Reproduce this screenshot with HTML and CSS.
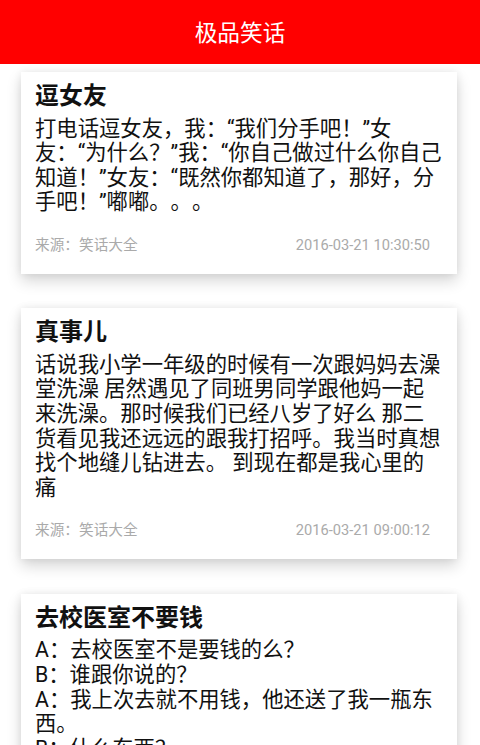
FILE: index.html
```html
<!DOCTYPE html>
<html lang="zh-CN">
<head>
<meta charset="utf-8">
<title>极品笑话</title>
<link rel="stylesheet" href="styles.css">
</head>
<body>
<header class="appbar">极品笑话</header>
<main class="list">
  <article class="card">
    <h2 class="card-title">逗女友</h2>
    <p class="card-body">打电话逗女友，我：“我们分手吧！”女友：&#8288;“为什么？”我：“你自己做过什么你自己知道！”女友：“既然你都知道了，那好，分手吧！”嘟嘟。。。</p>
    <div class="card-foot"><span>来源：笑话大全</span><span class="date">2016-03-21 10:30:50</span></div>
  </article>
  <article class="card">
    <h2 class="card-title">真事儿</h2>
    <p class="card-body">话说我小学一年级的时候有一次跟妈妈去澡堂洗澡 居然遇见了同班男同学跟他妈一起来洗澡。那时候我们已经八岁了好么 那二货看见我还远远的跟我打招呼。我当时真想找个地缝儿钻进去。 到现在都是我心里的痛</p>
    <div class="card-foot"><span>来源：笑话大全</span><span class="date">2016-03-21 09:00:12</span></div>
  </article>
  <article class="card">
    <h2 class="card-title">去校医室不要钱</h2>
    <p class="card-body pre">A：去校医室不是要钱的么？
B：谁跟你说的？
A：我上次去就不用钱，他还送了我一瓶东西。
B：什么东西？</p>
    <div class="card-foot"><span>来源：笑话大全</span><span class="date">2016-03-21 08:30:00</span></div>
  </article>
</main>
</body>
</html>
```
FILE: styles.css
```css
html, body {
  margin: 0;
  padding: 0;
  background: #ffffff;
}
body {
  font-family: Roboto, "Noto Sans CJK SC", sans-serif;
  color: #111111;
  text-spacing-trim: space-all;
}
.appbar {
  height: 64px;
  background: #ff0000;
  color: #ffffff;
  display: flex;
  align-items: center;
  justify-content: center;
  font-family: "Noto Sans CJK SC", sans-serif;
  font-size: 22.67px;
  line-height: 1;
  padding-top: 1px;
  box-sizing: border-box;
}
.list {
  display: flex;
  flex-direction: column;
  gap: 34.5px;
  padding: 8px 23px 40px 21px;
}
.card {
  background: #ffffff;
  padding: 8px 14px 19px 14px;
  box-shadow: 0 7px 14px rgba(0, 0, 0, 0.16), 0 0 8px rgba(0, 0, 0, 0.07);
}
.card-title {
  margin: 0 0 8.5px 0;
  font-family: "Noto Sans CJK SC", sans-serif;
  font-size: 24px;
  line-height: 28px;
  font-weight: bold;
  color: #111111;
}
.card-body {
  margin: 0;
  font-size: 21.33px;
  line-height: 24.6px;
  color: #111111;
}
.pre {
  white-space: pre-line;
}
.card-foot {
  margin-top: 20px;
  display: flex;
  justify-content: space-between;
  padding-right: 13px;
  font-size: 14.67px;
  line-height: 20px;
  color: #aaaaaa;
}
.date {
  font-family: Roboto, sans-serif;
}
```
